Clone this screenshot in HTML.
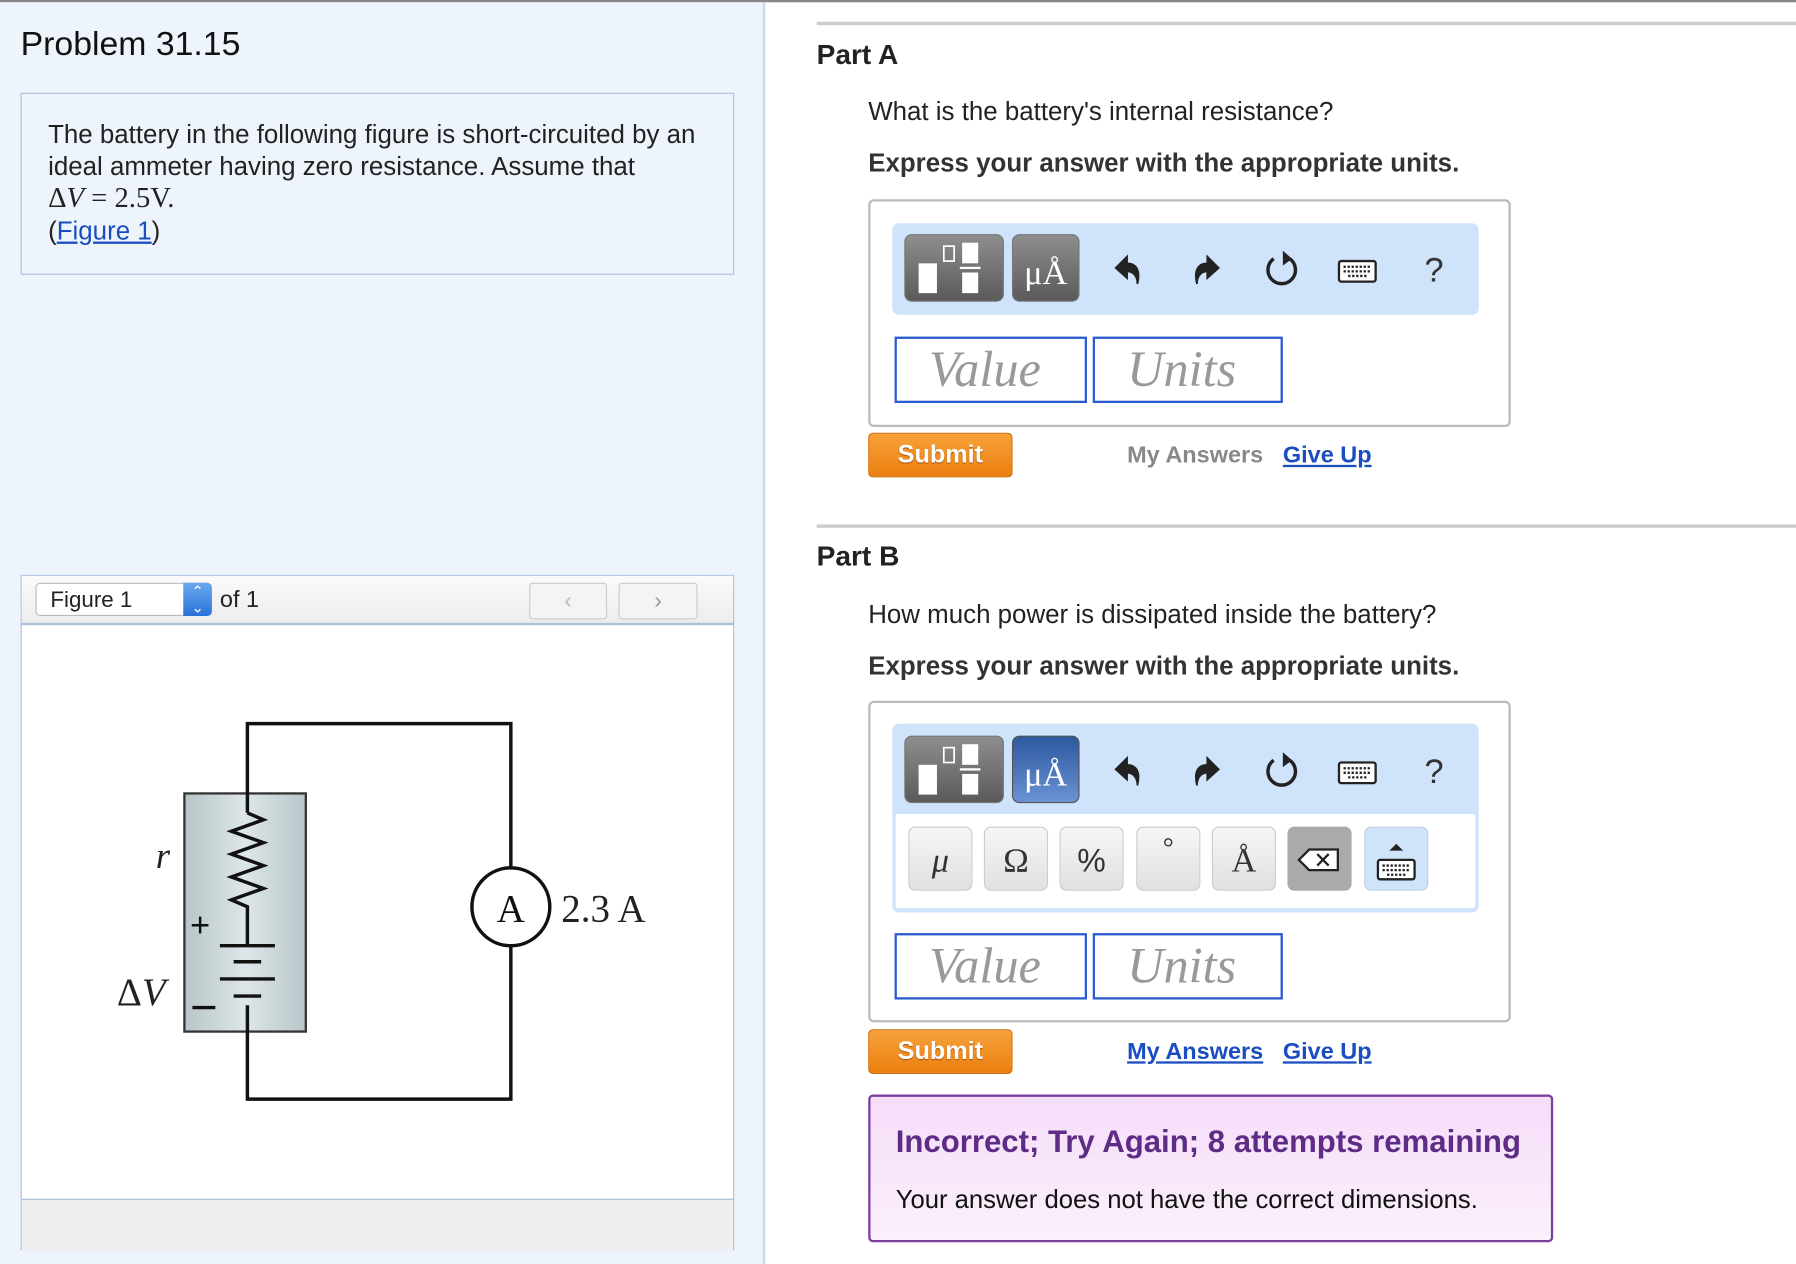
<!DOCTYPE html>
<html><head><meta charset="utf-8"><style>
html,body{margin:0;padding:0;width:1796px;height:1264px;overflow:hidden;background:#fff}
#w{position:absolute;left:0;top:0;width:1568px;height:1104px;transform:scale(1.14541,1.14493);transform-origin:0 0;font-family:"Liberation Sans",sans-serif;color:#222}
.a{position:absolute}
.tb{position:absolute;background:#cfe3fb;border-radius:6px}
.inp{position:absolute;border:2px solid #2a5bd0;background:#fff;font-family:"Liberation Serif",serif;font-style:italic;font-size:44px;color:#999;box-sizing:border-box;padding-left:28px;line-height:54px}
.sub{position:absolute;background:linear-gradient(#f7a23a,#ec7f10);border:1px solid #d06d08;border-radius:4px;color:#fff;font-weight:bold;font-size:22px;text-align:center;line-height:36px;text-shadow:0 1px 1px #a0500a}
.key{position:absolute;top:722px;width:56px;height:56px;border:1px solid #ccc;border-radius:6px;background:linear-gradient(#f6f6f6,#e0e0e0);box-sizing:border-box;text-align:center;font-family:"Liberation Serif",serif;font-size:30px;line-height:58px;color:#333}
</style></head><body><div id="w">
<div class="a" style="left:0;top:0;width:1568px;height:2px;background:#888"></div>
<div class="a" style="left:0;top:2px;width:666px;height:1102px;background:#eef4fc;border-right:2px solid #c9d8ea"></div>
<div class="a" style="left:18px;top:22px;font-size:29.5px;color:#111">Problem 31.15</div>
<div class="a" style="left:18px;top:81px;width:623px;height:159px;border:1px solid #a9c0dc;font-size:22.6px;line-height:28px;padding:22px 0 0 23px;box-sizing:border-box;color:#222">The battery in the following figure is short-circuited by an<br>ideal ammeter having zero resistance. Assume that<br><span style="font-family:'Liberation Serif',serif;font-size:25px">Δ<i>V</i> = 2.5V.</span><br>(<span style="color:#1a4ec0;text-decoration:underline">Figure 1</span>)</div>
<div class="a" style="left:18px;top:502px;width:623px;height:590px;border:1px solid #a9c0dc;background:#fff;box-sizing:border-box"></div>
<div class="a" style="left:19px;top:503px;width:621px;height:41px;background:linear-gradient(#fbfbfb,#ececec);border-bottom:2px solid #a9c0dc"></div>
<div class="a" style="left:31px;top:509px;width:153px;height:29px;border:1px solid #bbb;border-radius:4px;background:#fff;font-size:19.5px;line-height:29px;padding-left:12px;box-sizing:border-box">Figure 1</div>
<div class="a" style="left:160px;top:509px;width:25px;height:29px;background:linear-gradient(#6aa8f0,#2a72d8);border-radius:0 4px 4px 0;color:#fff;font-size:13px;text-align:center;line-height:14px;padding-top:1px;box-sizing:border-box">⌃<br>⌄</div>
<div class="a" style="left:192px;top:512px;font-size:20.5px">of 1</div>
<div class="a" style="left:462px;top:509px;width:66px;height:30px;border:1px solid #ccc;border-radius:3px;background:#f4f4f4;color:#bbb;text-align:center;line-height:30px;font-size:20px">‹</div>
<div class="a" style="left:540px;top:509px;width:67px;height:30px;border:1px solid #ccc;border-radius:3px;background:#f4f4f4;color:#999;text-align:center;line-height:30px;font-size:20px">›</div>
<div class="a" style="left:19px;top:1047px;width:621px;height:44px;background:#efefef;border-top:1px solid #a9c0dc"></div>
<svg class="a" style="left:0;top:0" width="666" height="1104">
<defs><linearGradient id="bg" x1="0" x2="1"><stop offset="0" stop-color="#b8c6c9"/><stop offset=".5" stop-color="#dde6e8"/><stop offset="1" stop-color="#b8c6c9"/></linearGradient></defs>
<rect x="161" y="693" width="106" height="208" fill="url(#bg)" stroke="#333" stroke-width="2"/>
<path d="M216 710 V632 H446 V758 M446 826 V960 H216 V878" fill="none" stroke="#111" stroke-width="3"/>
<path d="M216 710 L230 716 L202 726 L230 736 L202 746 L230 756 L202 766 L230 776 L202 786 L216 792 V826" fill="none" stroke="#111" stroke-width="3"/>
<path d="M192 826 H240 M204 840 H228 M192 855 H240 M204 870 H228" stroke="#111" stroke-width="3"/>
<circle cx="446" cy="792" r="34" fill="#fff" stroke="#111" stroke-width="3"/>
<text x="446" y="805" text-anchor="middle" font-family="Liberation Serif" font-size="34" fill="#111">A</text>
<text x="490" y="805" font-family="Liberation Serif" font-size="34" fill="#222">2.3 A</text>
<text x="136" y="758" font-family="Liberation Serif" font-style="italic" font-size="32" fill="#222">r</text>
<text x="102" y="878" font-family="Liberation Serif" font-size="34" fill="#222">Δ<tspan font-style="italic">V</tspan></text>
<text x="166" y="818" font-family="Liberation Sans" font-size="30" fill="#111">+</text>
<path d="M168 880 H188" stroke="#111" stroke-width="3"/>
</svg>
<!-- Part A -->
<div class="a" style="left:713px;top:19px;width:855px;height:3px;background:#ccc"></div>
<div class="a" style="left:713px;top:35px;font-size:24.5px;font-weight:bold;color:#222">Part A</div>
<div class="a" style="left:758px;top:85px;font-size:22.6px">What is the battery's internal resistance?</div>
<div class="a" style="left:758px;top:130px;font-size:22.6px;font-weight:bold;color:#333">Express your answer with the appropriate units.</div>
<div class="a" style="left:758px;top:174px;width:561px;height:199px;border:2px solid #bbb;border-radius:5px;box-sizing:border-box"></div>
<div class="tb" style="left:779px;top:195px;width:512px;height:80px"></div>
<!-- Part B -->
<div class="a" style="left:713px;top:458px;width:855px;height:3px;background:#ccc"></div>
<div class="a" style="left:713px;top:473px;font-size:24.5px;font-weight:bold;color:#222">Part B</div>
<div class="a" style="left:758px;top:524px;font-size:22.6px">How much power is dissipated inside the battery?</div>
<div class="a" style="left:758px;top:569px;font-size:22.6px;font-weight:bold;color:#333">Express your answer with the appropriate units.</div>
<div class="a" style="left:758px;top:612px;width:561px;height:281px;border:2px solid #bbb;border-radius:5px;box-sizing:border-box"></div>
<div class="tb" style="left:779px;top:632px;width:512px;height:165px"></div>
<div class="a" style="left:782px;top:711px;width:506px;height:82px;background:#fff"></div>
<div class="key" style="left:793px;font-style:italic">μ</div>
<div class="key" style="left:859px">Ω</div>
<div class="key" style="left:925px;font-family:'Liberation Sans';font-size:28px">%</div>
<div class="key" style="left:992px;line-height:36px;font-size:24px">°</div>
<div class="key" style="left:1058px">Å</div>
<div class="key" style="left:1124px;background:#aaa;border-color:#aaa"><svg width="40" height="24" style="margin-top:16px"><path d="M2 12 L11 3 H36 V21 H11 Z" fill="#fff" stroke="#222" stroke-width="2"/><path d="M18 7 L28 17 M28 7 L18 17" stroke="#222" stroke-width="2"/></svg></div>
<div class="key" style="left:1191px;background:#cfe3fb;border-color:#c0d0e0"><svg width="36" height="40" style="margin-top:10px"><path d="M12 10 L18 4 L24 10 Z" fill="#222"/><rect x="2" y="18" width="32" height="17" rx="2" fill="#fff" stroke="#222" stroke-width="2"/><path d="M6 23 H30 M6 27 H30 M10 31 H26" stroke="#222" stroke-width="2" stroke-dasharray="2 1.5"/></svg></div>
<div class="inp" style="left:781px;top:294px;width:168px;height:58px">Value</div>
<div class="inp" style="left:954px;top:294px;width:166px;height:58px">Units</div>
<div class="inp" style="left:781px;top:815px;width:168px;height:58px">Value</div>
<div class="inp" style="left:954px;top:815px;width:166px;height:58px">Units</div>
<div class="sub" style="left:758px;top:378px;width:124px;height:37px">Submit</div>
<div class="sub" style="left:758px;top:899px;width:124px;height:37px">Submit</div>
<div class="a" style="left:984px;top:386px;font-size:20.5px;font-weight:bold;color:#888">My Answers</div>
<div class="a" style="left:1120px;top:386px;font-size:20.5px;font-weight:bold;color:#1a4ec0;text-decoration:underline">Give Up</div>
<div class="a" style="left:984px;top:907px;font-size:20.5px;font-weight:bold;color:#1a4ec0;text-decoration:underline">My Answers</div>
<div class="a" style="left:1120px;top:907px;font-size:20.5px;font-weight:bold;color:#1a4ec0;text-decoration:underline">Give Up</div>
<div class="a" style="left:758px;top:956px;width:598px;height:129px;border:2px solid #7b3f9e;border-radius:4px;background:linear-gradient(#f5ddf8,#fbf0fc);box-sizing:border-box"></div>
<div class="a" style="left:782px;top:981px;font-size:27.2px;font-weight:bold;color:#5e2c86">Incorrect; Try Again; 8 attempts remaining</div>
<div class="a" style="left:782px;top:1035px;font-size:22.4px;color:#111">Your answer does not have the correct dimensions.</div>
<svg class="a" style="left:0;top:0;overflow:visible" width="1568" height="1104">
<defs>
<linearGradient id="dk" x1="0" y1="0" x2="0" y2="1"><stop offset="0" stop-color="#8e8e8e"/><stop offset="1" stop-color="#5a5a5a"/></linearGradient>
<linearGradient id="bl" x1="0" y1="0" x2="0" y2="1"><stop offset="0" stop-color="#2c589e"/><stop offset="1" stop-color="#6a93d4"/></linearGradient>
<g id="tool">
<rect x="790" y="205" width="86" height="58" rx="6" fill="url(#dk)" stroke="#777"/>
<rect x="802" y="230" width="16" height="26" fill="#fff"/><rect x="824" y="215" width="9" height="13" fill="none" stroke="#fff" stroke-width="1.5"/>
<rect x="840" y="212" width="14" height="18" fill="#fff"/><rect x="838" y="233" width="18" height="2" fill="#fff"/><rect x="840" y="238" width="14" height="18" fill="#fff"/>
<path d="M993 248 C996 236 992 230 984 230 V224 L974 234 L984 243 V237 C990 237 993 242 993 248Z" fill="#222" stroke="#222" stroke-width="1.5"/>
<path d="M1045 248 C1042 236 1046 230 1054 230 V224 L1064 234 L1054 243 V237 C1048 237 1045 242 1045 248Z" fill="#222" stroke="#222" stroke-width="1.5"/>
<path d="M1126 226 A12 12 0 1 1 1112 226" fill="none" stroke="#222" stroke-width="3"/><path d="M1120 219 L1128 226 L1120 232Z" fill="#222"/>
<rect x="1169" y="228" width="32" height="18" rx="2" fill="#fff" stroke="#222" stroke-width="2"/>
<path d="M1173 233 H1197 M1173 237 H1197 M1177 241 H1193" stroke="#222" stroke-width="2" stroke-dasharray="2 1.5"/>
<text x="1252" y="246" text-anchor="middle" font-family="Liberation Sans" font-size="30" fill="#333">?</text>
</g></defs>
<use href="#tool"/>
<rect x="884" y="205" width="58" height="58" rx="6" fill="url(#dk)" stroke="#777"/>
<text x="913" y="248" text-anchor="middle" font-family="Liberation Serif" font-size="30" fill="#fff">μÅ</text>
<use href="#tool" y="438"/>
<rect x="884" y="643" width="58" height="58" rx="6" fill="url(#bl)" stroke="#555"/>
<text x="913" y="686" text-anchor="middle" font-family="Liberation Serif" font-size="30" fill="#fff">μÅ</text>
</svg>
</div></body></html>
